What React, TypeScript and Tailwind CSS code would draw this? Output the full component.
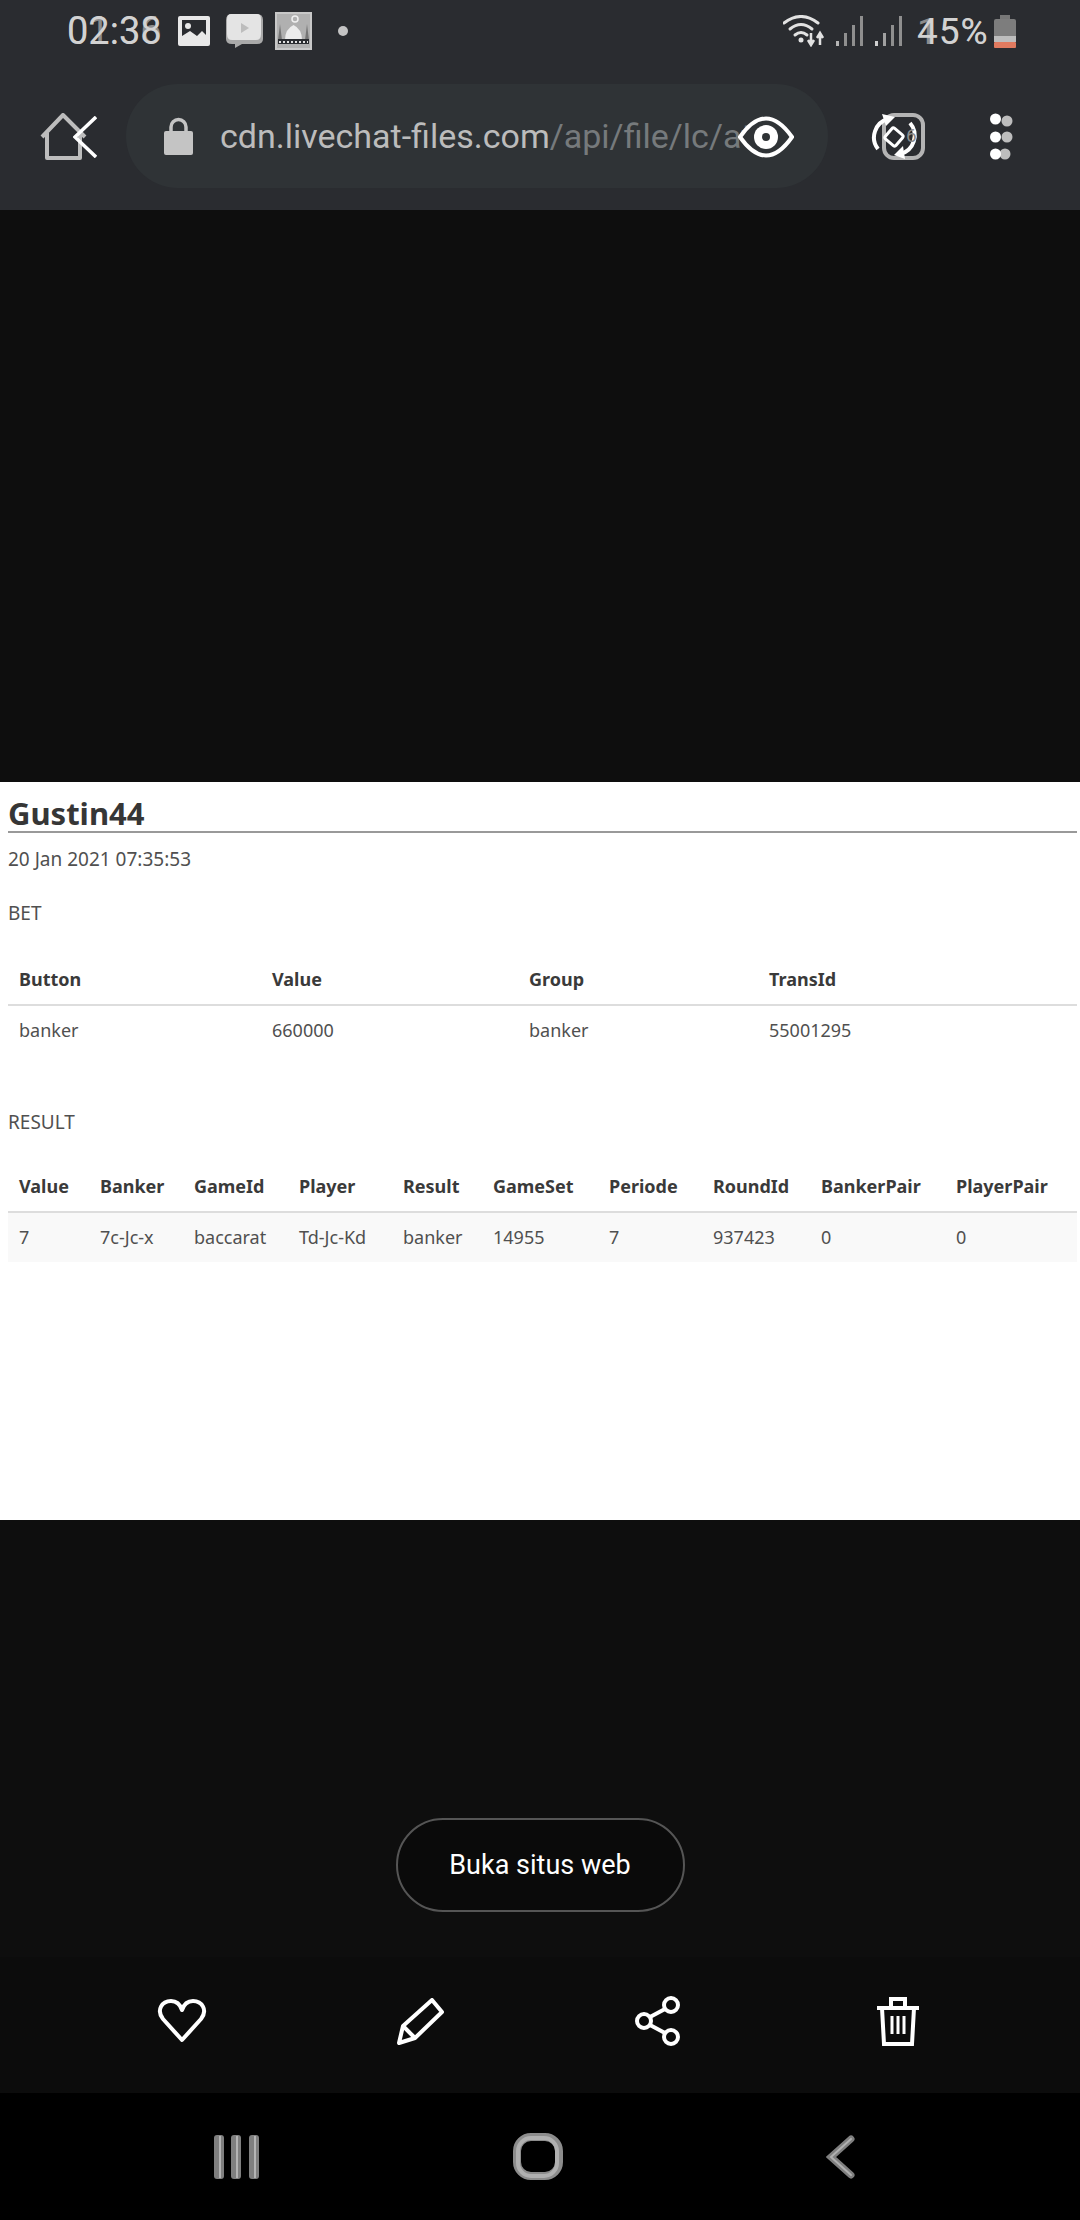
import React from 'react';

const BET_COLS = [
  { name: 'Button', value: 'banker', width: 'w-[253px]' },
  { name: 'Value', value: '660000', width: 'w-[257px]' },
  { name: 'Group', value: 'banker', width: 'w-[240px]' },
  { name: 'TransId', value: '55001295', width: 'w-[319px]' },
];

const RESULT_COLS = [
  { name: 'Value', value: '7', width: 'w-[81px]' },
  { name: 'Banker', value: '7c-Jc-x', width: 'w-[94px]' },
  { name: 'GameId', value: 'baccarat', width: 'w-[105px]' },
  { name: 'Player', value: 'Td-Jc-Kd', width: 'w-[104px]' },
  { name: 'Result', value: 'banker', width: 'w-[90px]' },
  { name: 'GameSet', value: '14955', width: 'w-[116px]' },
  { name: 'Periode', value: '7', width: 'w-[104px]' },
  { name: 'RoundId', value: '937423', width: 'w-[108px]' },
  { name: 'BankerPair', value: '0', width: 'w-[135px]' },
  { name: 'PlayerPair', value: '0', width: 'w-[132px]' },
];

type Col = { name: string; value: string; width: string };

const DataTable: React.FC<{ cols: Col[]; striped?: boolean }> = ({ cols, striped }) => (
  <table className="table-fixed border-collapse w-[1069px] ml-2">
    <thead>
      <tr className="border-b-2 border-[#dddddd]">
        {cols.map(c => (
          <th key={c.name} className={`${c.width} h-[50px] pl-[11px] text-left font-bold text-[18px] text-[#3a3a3a]`}>{c.name}</th>
        ))}
      </tr>
    </thead>
    <tbody>
      <tr className={striped ? 'bg-[#f9f9f9]' : ''}>
        {cols.map(c => (
          <td key={c.name} className="h-[50px] pl-[11px] text-[18px] text-[#505050]">{c.value}</td>
        ))}
      </tr>
    </tbody>
  </table>
);

const StatusBar = () => (
  <div className="h-[62px] flex items-center text-[#d4d4d4] font-['Roboto',sans-serif]">
    <div className="relative ml-[67px] w-[99px] text-[38px] leading-none">
      <span className="absolute left-0 top-0 text-[#8c8c8c]">01:36</span>
      <span className="relative text-[#d2d2d2]">02:38</span>
    </div>
    <svg className="ml-[12px]" width="32" height="30" viewBox="0 0 32 30">
      <rect width="32" height="30" rx="2" fill="#e8e8e8" />
      <rect x="4" y="4" width="24" height="20" fill="#2a2c30" />
      <circle cx="10" cy="10" r="3" fill="#e8e8e8" />
      <path d="M4 24 L4 20 L12 15 L19 20 L24 15 L28 19 L28 24 Z" fill="#e8e8e8" />
    </svg>
    <svg className="ml-[16px]" width="37" height="34" viewBox="0 0 37 34">
      <path d="M6 0 H31 Q37 0 37 6 V25 Q37 30 31 30 H16 L9 34 V30 H6 Q0 30 0 25 V6 Q0 0 6 0 Z" fill="#a9a9a9" />
      <path d="M5 0 H31 Q35 0 35 5 V20 Q35 26 30 26 H6 Q1 26 1 20 V5 Q1 0 5 0 Z" fill="#e4e4e4" />
      <path d="M15 9 L23 14 L15 19 Z" fill="#bdbdbd" />
    </svg>
    <svg className="ml-[12px]" width="37" height="38" viewBox="0 0 37 38">
      <rect width="37" height="38" fill="#c8c8c8" />
      <rect x="2" y="2" width="33" height="34" fill="#b0b0b0" />
      <path d="M10 28 Q10 17 18.5 13 Q27 17 27 28 Z" fill="#ececec" />
      <path d="M3 28 L5 12 L7 28 Z M30 28 L32 12 L34 28 Z" fill="#757575" />
      <circle cx="20" cy="7" r="3" fill="none" stroke="#efefef" strokeWidth="1.5" />
      <rect x="3" y="27" width="31" height="5" fill="#2a2c30" />
      <path d="M4 30 H33" stroke="#e0e0e0" strokeWidth="2" strokeDasharray="2 2" />
    </svg>
    <span className="ml-[26px] w-[10px] h-[10px] rounded-full bg-[#c4c4c4]"></span>

    <svg className="ml-[435px]" width="43" height="32" viewBox="0 0 43 32">
      <g fill="none" stroke="#e2e2e2" strokeWidth="3" strokeLinecap="round">
        <path d="M1 8 Q18 -5 35 8" />
        <path d="M7 14 Q18 5 29 14" />
        <path d="M12 20 Q18 15 24 20" />
      </g>
      <circle cx="18" cy="25" r="2.5" fill="#e2e2e2" />
      <path d="M28 18 V28 M25 25 L28 30 L31 25 M37 30 V20 M34 23 L37 18 L40 23" fill="none" stroke="#e2e2e2" strokeWidth="2.5" />
    </svg>
    <svg className="ml-[10px]" width="28" height="30" viewBox="0 0 28 30">
      <rect x="0" y="25" width="3" height="5" fill="#b5b5b5" />
      <rect x="8" y="17" width="3" height="13" fill="#8f8f8f" />
      <rect x="16" y="9" width="3" height="21" fill="#8f8f8f" />
      <rect x="24" y="0" width="3" height="30" fill="#8f8f8f" />
    </svg>
    <svg className="ml-[11px]" width="28" height="30" viewBox="0 0 28 30">
      <rect x="0" y="25" width="3" height="5" fill="#d0d0d0" />
      <rect x="8" y="17" width="3" height="13" fill="#a0a0a0" />
      <rect x="16" y="9" width="3" height="21" fill="#8f8f8f" />
      <rect x="24" y="0" width="3" height="30" fill="#8f8f8f" />
    </svg>
    <div className="relative ml-[14px] w-[72px] text-[37px] leading-none tracking-[1px] whitespace-nowrap">
      <span className="absolute left-0 top-0 text-[#8c8c8c]">15%</span>
      <span className="relative text-[#d2d2d2]">45%</span>
    </div>
    <svg className="ml-[5px]" width="22" height="33" viewBox="0 0 22 33">
      <rect x="6" y="0" width="10" height="4" fill="#777777" />
      <rect x="0" y="4" width="22" height="20" rx="2" fill="#7d7d7d" />
      <rect x="0" y="21" width="22" height="6" fill="#bdbdbd" />
      <rect x="0" y="27" width="22" height="6" rx="1" fill="#e07a5f" />
    </svg>
  </div>
);

const Toolbar = () => (
  <div className="h-[148px] flex items-start pt-[22px]">
    <div className="relative ml-[40px] mt-[29px] w-[57px] h-[47px]">
      <svg width="47" height="47" viewBox="0 0 47 47" fill="none" stroke="#bdbdbd" strokeWidth="4" strokeLinejoin="round">
        <path d="M2 24 L23 2 L45 24" />
        <path d="M7 20 V45 H40 V20" />
      </svg>
      <svg className="absolute left-[33px] top-[3px]" width="24" height="42" viewBox="0 0 24 42" fill="none" stroke="#ffffff" strokeWidth="3.5">
        <path d="M23 1 L2 21 L23 41" />
      </svg>
    </div>

    <div className="relative ml-[29px] w-[702px] h-[104px] rounded-full bg-[#2f3336] flex items-center">
      <svg className="ml-[38px] shrink-0" width="29" height="38" viewBox="0 0 29 38">
        <path d="M7 16 V10 A7.5 7.5 0 0 1 22 10 V16" fill="none" stroke="#c4c4c4" strokeWidth="3.5" />
        <rect x="0" y="14" width="29" height="24" rx="2" fill="#c4c4c4" />
      </svg>
      <span className="ml-[27px] shrink-0 whitespace-nowrap text-[34px] font-['Roboto',sans-serif] text-[#bcbcbc]">
        cdn.livechat-files.com<span className="text-[#767a7c]">/api/file/lc/at</span>
      </span>
      <svg className="absolute left-[612px] top-[32px]" width="56" height="42" viewBox="0 0 56 42">
        <path d="M2 21 Q28 -16 54 21 Q28 58 2 21 Z" fill="#2f3336" stroke="#ffffff" strokeWidth="4" />
        <circle cx="28" cy="21" r="12" fill="#ffffff" />
        <circle cx="28" cy="21" r="4" fill="#2f3336" />
      </svg>
    </div>

    <div className="relative ml-[42px] mt-[29px] w-[55px] h-[47px]">
      <svg width="55" height="47" viewBox="0 0 55 47" fill="none">
        <rect x="14" y="2" width="39" height="43" rx="10" stroke="#b4b4b4" strokeWidth="4" />
        <path d="M8 36 A19 19 0 0 1 18 6" stroke="#ffffff" strokeWidth="4" />
        <path d="M12 1 L25 4 L16 13 Z" fill="#ffffff" />
        <path d="M40 10 A19 19 0 0 1 30 41" stroke="#ffffff" strokeWidth="4" />
        <path d="M35 46 L24 42 L33 33 Z" fill="#ffffff" />
        <rect x="17" y="17" width="14" height="14" rx="2" transform="rotate(40 24 24)" stroke="#ffffff" strokeWidth="3" />
      </svg>
      <span className="absolute left-[36px] top-[11px] text-[19px] leading-[24px] font-['Roboto',sans-serif] text-[#8c8c8c]">6</span>
    </div>

    <svg className="ml-[65px] mt-[28px]" width="24" height="50" viewBox="0 0 24 50">
      <circle cx="17" cy="9" r="5.5" fill="#bdbdbd" />
      <circle cx="17" cy="25" r="5.5" fill="#bdbdbd" />
      <circle cx="15" cy="42" r="5.5" fill="#bdbdbd" />
      <circle cx="5.5" cy="7" r="5.5" fill="#ffffff" />
      <circle cx="5.5" cy="25" r="5.5" fill="#ffffff" />
      <circle cx="5.5" cy="42" r="5.5" fill="#ffffff" />
    </svg>
  </div>
);

const WebPage = () => (
  <div className="h-[738px] bg-white font-['Noto_Sans',sans-serif] text-[#505050]">
    <div className="ml-2 mr-[3px] h-[51px] pt-[10px] border-b-2 border-[#999999] text-[31px] leading-[42px] font-bold text-[#363636]">Gustin44</div>
    <p className="ml-2 mt-[13px] h-[26px] text-[19px] leading-[26px]">20 Jan 2021 07:35:53</p>
    <p className="ml-2 mt-[28px] h-[26px] text-[19px] leading-[26px]">BET</p>
    <div className="mt-[29px]"><DataTable cols={BET_COLS} /></div>
    <p className="ml-2 mt-[54px] h-[26px] text-[19px] leading-[26px]">RESULT</p>
    <div className="mt-[27px]"><DataTable cols={RESULT_COLS} striped /></div>
  </div>
);

const ActionBar = () => (
  <div className="h-[136px] bg-[#0c0c0c] flex items-center pl-[157px] pb-[8px]">
    <svg width="50" height="44" viewBox="0 0 50 44" fill="none" stroke="#ffffff" strokeWidth="4" strokeLinejoin="round">
      <path d="M25 41 L6 20 C-1 11 5 2 14 2 C19 2 23 5 25 11 C27 5 31 2 36 2 C45 2 51 11 44 20 Z" />
    </svg>
    <svg className="ml-[190px]" width="47" height="47" viewBox="0 0 47 47" fill="none" stroke="#ffffff" strokeWidth="4" strokeLinejoin="round">
      <path d="M35 2 L45 14 L18 40 L2 45 L6 28 Z" />
      <path d="M6 28 L18 40" />
    </svg>
    <svg className="ml-[191px]" width="46" height="50" viewBox="0 0 46 50" fill="none" stroke="#ffffff" strokeWidth="4">
      <circle cx="36" cy="9" r="7" />
      <circle cx="9" cy="25" r="7" />
      <circle cx="36" cy="41" r="7" />
      <path d="M15 21 L30 13 M15 29 L30 37" />
    </svg>
    <svg className="ml-[196px]" width="42" height="50" viewBox="0 0 42 50" fill="none" stroke="#ffffff" strokeWidth="4">
      <path d="M0 12 H42" />
      <path d="M14 11 V3 H28 V11" />
      <path d="M5 12 L7 48 H35 L37 12" />
      <path d="M15 20 V38 M21 20 V38 M27 20 V38" strokeWidth="3" />
    </svg>
  </div>
);

const NavBar = () => (
  <div className="h-[127px] bg-black flex items-center pl-[214px]">
    <svg width="45" height="44" viewBox="0 0 45 44">
      <g fill="#7f7f7f">
        <rect x="0" y="0" width="10" height="44" rx="3" />
        <rect x="17" y="0" width="10" height="44" rx="3" />
        <rect x="35" y="0" width="10" height="44" rx="3" />
      </g>
      <g fill="#b4b4b4">
        <rect x="5" y="1" width="2" height="42" />
        <rect x="22" y="1" width="2" height="42" />
        <rect x="40" y="1" width="2" height="42" />
      </g>
    </svg>
    <svg className="ml-[254px]" width="50" height="47" viewBox="0 0 50 47" fill="none">
      <rect x="4" y="4" width="42" height="39" rx="14" stroke="#8c8c8c" strokeWidth="8" />
      <rect x="5" y="5" width="39" height="38" rx="13" stroke="#b0b0b0" strokeWidth="4" />
    </svg>
    <svg className="ml-[263px]" width="29" height="44" viewBox="0 0 29 44" fill="none" strokeLinecap="round">
      <path d="M25 4 L5 22 L25 40" stroke="#7f7f7f" strokeWidth="7" />
      <path d="M25 4 L5 22 L25 40" stroke="#b0b0b0" strokeWidth="2" />
    </svg>
  </div>
);

export default function App() {
  return (
    <div className="w-[1080px] h-[2220px] overflow-hidden bg-[#0e0e0e]">
      <div className="h-[210px] bg-[#2a2c30]">
        <StatusBar />
        <Toolbar />
      </div>
      <div className="h-[572px] bg-[#0e0e0e]"></div>
      <WebPage />
      <div className="h-[437px] bg-[#0e0e0e] pt-[298px] flex justify-center">
        <button className="w-[289px] h-[94px] rounded-full border-2 border-[#555555] bg-[#0a0a0a] text-white text-[27px] font-['Roboto',sans-serif]">
          Buka situs web
        </button>
      </div>
      <ActionBar />
      <NavBar />
    </div>
  );
}
